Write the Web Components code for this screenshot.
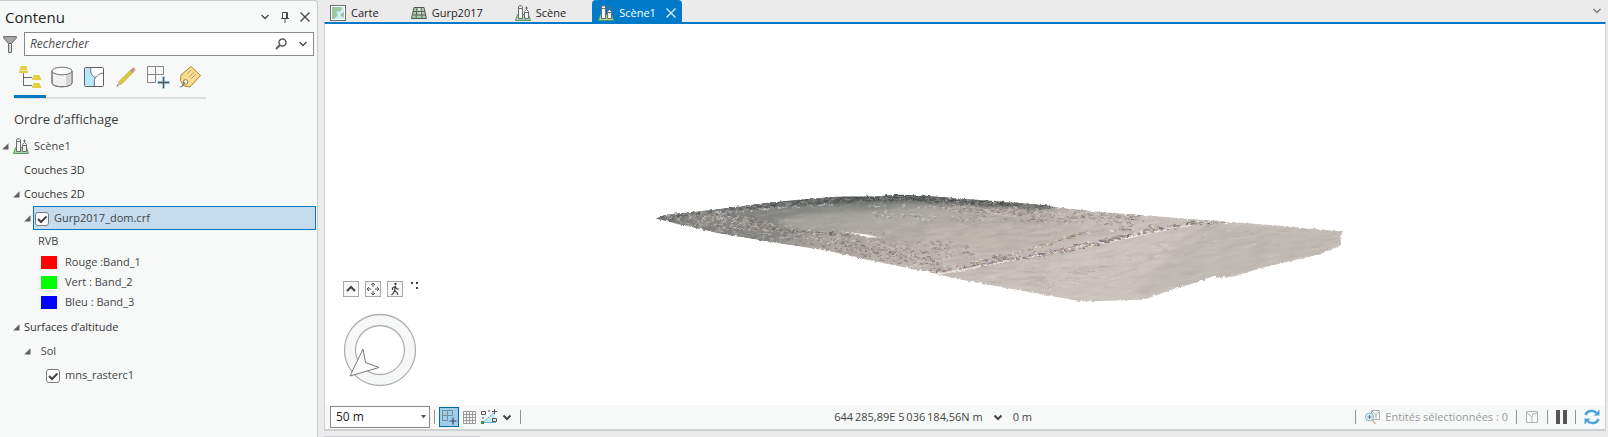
<!DOCTYPE html>
<html lang="fr">
<head>
<meta charset="utf-8">
<title>Scène1</title>
<style>
html, body { height: 100%; margin: 0; }
body { background: #ebebeb; font: 11px/16px "Open Sans", "Noto Sans", sans-serif; color: #444; }
</style>
</head>
<body>
<app-shell>
  <contents-pane slot="side"></contents-pane>
  <view-pane></view-pane>
</app-shell>
<script>
const ICONS = {
  chevron: '<svg width="10" height="10" viewBox="0 0 10 10" fill="none" stroke="currentColor" stroke-width="1.4"><path d="M1.5 3 5 6.5 8.5 3"/></svg>',
  chevronBold: '<svg width="10" height="10" viewBox="0 0 10 10" fill="none" stroke="currentColor" stroke-width="2"><path d="M1.500 3.500 5 7 8.500 3.500"/></svg>',
  pin: '<svg width="10" height="12" viewBox="0 0 10 12" fill="none" stroke="currentColor"><path d="M2.500 7V1.500h5V7M1 7.500h8M5 7.500V12M6.500 1.500V7" /></svg>',
  close: '<svg width="10" height="10" viewBox="0 0 10 10" fill="none" stroke="currentColor" stroke-width="1.4"><path d="M.5.5 9.500 9.500M9.500.5.5 9.500"/></svg>',
  funnel: '<svg width="14" height="17" viewBox="0 0 14 17" fill="#a8a8a8" stroke="#6a6a6a"><path d="M.6.6H13.400V2L8.500 7.500H5.500L.6 2Z"/><path fill="#d8d8d8" d="M5.500 7.500h3V16.400h-3Z"/></svg>',
  search: '<svg width="12" height="12" viewBox="0 0 12 12" fill="none" stroke="#5a5a5a"><circle cx="7.500" cy="4.500" r="3.500" stroke-width="1.500"/><path d="M5 7 1 11" stroke-width="2"/></svg>',
  expander: '<svg width="7" height="7" viewBox="0 0 7 7"><path d="M6.500.2V6.500H.2Z" fill="#5e5e5e"/></svg>',
  order: '<svg width="24" height="24" viewBox="0 0 24 24"><path d="M5.500 8V20.500H14M5.500 12.500H14" fill="none" stroke="#6a6a6a"/><g fill="#e6cf4b"><path d="M2.500 1H8.500L9.500 5.500H1.500Z"/><path d="M1 6H10V8H1Z"/><path d="M15.500 10H21.500L22.500 13H23V15H14V13H14.500Z"/><path d="M15.500 18H21.500L22.500 21H23V23H14V21H14.500Z"/></g></svg>',
  cylinder: '<svg width="24" height="24" viewBox="0 0 24 24" stroke="#747474"><path d="M2 6V18C2 23 22 23 22 18V6" fill="#f1f1f1"/><path d="M16 9V21C20 20.500 22 19.500 22 18V6Z" fill="#d4d4d4" stroke="none"/><path d="M2 6V18C2 23 22 23 22 18V6" fill="none"/><ellipse cx="12" cy="6" rx="10" ry="3.800" fill="#fafafa"/></svg>',
  selection: '<svg width="24" height="24" viewBox="0 0 24 24" fill="none"><rect x="2.500" y="2.500" width="19" height="19" rx="1" fill="#fff"/><path d="M3 3H9C8 7 9 10 13 12.500L12 16 12.500 21H3Z" fill="#b4e8fa"/><path d="M9 3C8 7 9 10 13 12.500 12 16 12.500 18 12.500 21M13 12.500C16 12 15 9 21 8" stroke="#6a6a6a"/><rect x="2.500" y="2.500" width="19" height="19" rx="1" stroke="#5e5e5e"/></svg>',
  pencil: '<svg width="24" height="24" viewBox="0 0 24 24"><path d="M4.500 17 16.500 5 19 7.500 7 19.500Z" fill="#dcc63a" stroke="#b39c2c" stroke-width=".6"/><path d="M4.500 17 7 19.500 2.500 21.500Z" fill="#c9b89b"/><path d="M2.500 21.500 3.200 19.800 4.200 20.800Z" fill="#444"/><path d="m16.500 5 1-1L20 6.500l-1 1Z" fill="#8a8a8a"/><path d="m17.500 4 1.500-1.500 2 .5.500 2L20 6.500Z" fill="#e98f86"/></svg>',
  snapping: '<svg width="24" height="24" viewBox="0 0 24 24" fill="none"><path d="M1.500 1.500h16v8M9.500 1.500v16M1.500 1.500v16h8M1.500 9.500h16" stroke="#858585"/><path d="M17.500 11V24M11 17.500H24" stroke="#a9dcf7" stroke-width="3"/><path d="M17.500 12V23M12 17.500H23" stroke="#555" stroke-width="1.300"/></svg>',
  label: '<svg width="24" height="24" viewBox="0 0 24 24" fill="none"><path d="M2.500 15.500 3 10 13 1.500 22.500 10.500 12 22 6 21Z" fill="#f6dc94" stroke="#b5862c" stroke-linejoin="round"/><path d="m9 9 4-4M11 12l5-5M13 14l5-5" stroke="#cba65a"/><circle cx="7.500" cy="17" r="2.300" fill="#fff" stroke="#8c7a50"/><path d="M7 17.500C5 18 5.500 22 2 22" stroke="#777" stroke-width="1.200"/></svg>',
  scene: '<svg width="16" height="16" viewBox="0 0 16 16"><path d="M2.500 9.500h11L15.500 15.500H.5Z" fill="#a9d3a6" stroke="#5d9b62"/><path d="M3.500 13.500V2L4.500.7H6.500L7.500 2V13.500ZM3.500 3.500h4" fill="#f6f6f6" stroke="#6b6b6b"/><path d="M11.500 6V1.500M10.200 3h2.600" stroke="#6b6b6b"/><path d="M9.500 13.500V6.500L11.500 4.500 13.500 6.500V13.500ZM9.500 7.500h4" fill="#f6f6f6" stroke="#6b6b6b"/></svg>',
  map: '<svg width="16" height="16" viewBox="0 0 16 16"><rect x=".5" y=".5" width="15" height="15" fill="#fff" stroke="#6e6e6e"/><rect x="2" y="2" width="12" height="12" fill="#cdebf8"/><path d="M2 2H11L12 4 9 7 7 6 6.500 8 8 10 5 13 4 14H2ZM11 9l3-2v5l-3-1Z" fill="#9cc79c"/></svg>',
  globe: '<svg width="16" height="16" viewBox="0 0 16 16"><path d="M3 2.500H13L15.500 13.500H.5Z" fill="#a5cfa6" stroke="#555"/><path d="M7 3h3l2 5-3 1Z" fill="#e2e8e8"/><path d="M2 6.500H14M1 10H15M6 2.500 5 13.500M10 2.500 11 13.500" fill="none" stroke="#5c6360"/></svg>'
};

class BaseElement extends HTMLElement {
  constructor() { super(); this.attachShadow({ mode: 'open' }); }
  connectedCallback() { if (!this.shadowRoot.firstChild) this.shadowRoot.innerHTML = this.render(); }
}

customElements.define('app-shell', class extends BaseElement {
  render() { return `<style>
    :host { display: grid; grid-template-columns: 318px minmax(0, 1fr); column-gap: 6px; height: 100vh; overflow: hidden; }
    </style><slot name="side"></slot><slot></slot>`; }
});

customElements.define('app-icon', class extends BaseElement {
  render() { return `<style>:host { display: inline-flex; flex: none; } svg { display: block; }</style>${ICONS[this.getAttribute('name')]}`; }
});

customElements.define('tree-row', class extends BaseElement {
  render() {
    const a = n => this.getAttribute(n);
    const box = this.hasAttribute('checkbox');
    const label = box ? `<label><input type="checkbox" checked><slot></slot></label>` : `<span><slot></slot></span>`;
    return `<style>
      :host { display: flex; align-items: center; height: 24px; }
      .toggle { width: 10px; flex: none; padding: 0; border: 0; background: none; display: flex; margin-right: 1px; }
      .item { flex: 1; display: flex; align-items: center; gap: 5px; white-space: nowrap; box-sizing: border-box; height: 100%; }
      :host([selected]) .toggle { width: 9px; margin-right: 0; }
      :host([selected]) .item { background: #c5dbee; border: 1px solid #0079c1; padding-left: 1px; margin-right: 1px; }
      :host([strong]) .item { color: #333; font-weight: 500; }
      label { display: flex; align-items: center; gap: 5px; }
      input { appearance: none; width: 14px; height: 14px; margin: 1px 0 0; border: 1px solid #7a7a7a; border-radius: 3px; background: #fff; }
      input:checked { background: #fff url("data:image/svg+xml,%3Csvg xmlns='http://www.w3.org/2000/svg' viewBox='0 0 12 12'%3E%3Cpath d='M2 6 5 9 10.500 3.500' fill='none' stroke='%23444' stroke-width='2'/%3E%3C/svg%3E"); }
      </style>
      ${this.hasAttribute('open') ? `<button class="toggle" aria-label="Réduire"><app-icon name="expander"></app-icon></button>` : ''}
      <div class="item">${a('icon') ? `<app-icon name="${a('icon')}"></app-icon>` : ''}${label}</div>`;
  }
});

customElements.define('band-row', class extends BaseElement {
  render() { return `<style>
    :host { display: flex; align-items: center; gap: 8px; height: 20px; padding-left: 41px; }
    i { width: 16px; height: 13px; background: ${this.getAttribute('color')}; }
    </style><i></i><slot></slot>`; }
});

customElements.define('contents-pane', class extends BaseElement {
  render() {
    const tools = [['order', 'Ordre d’affichage'], ['cylinder', 'Source'], ['selection', 'Sélection'], ['pencil', 'Mise à jour'], ['snapping', 'Capture'], ['label', 'Étiquetage']];
    return `<style>
      :host { display: flex; flex-direction: column; background: #f7f9f8; border: 1px solid #cbcbcf; border-width: 1px 1px 0 0; border-radius: 0 4px 0 0; box-sizing: border-box; }
      button { padding: 0; border: 0; background: none; color: #4a4a4a; display: flex; align-items: center; justify-content: center; }
      header { display: flex; align-items: center; height: 31px; padding: 0 7px 0 5px; gap: 10px; }
      h1 { margin: 0; flex: 1; font-size: 15px; line-height: 20px; font-weight: 400; color: #222; }
      .search { display: flex; align-items: center; gap: 7px; padding: 0 3px; }
      .field { flex: 1; display: flex; align-items: center; height: 24px; box-sizing: border-box; border: 1px solid #8a8a8a; background: #fff; padding: 0 5px; gap: 11px; }
      input { flex: 1; min-width: 0; border: 0; outline: 0; padding: 0; background: none; font: italic 12px/16px "Open Sans", "Noto Sans", sans-serif; }
      input::placeholder { color: #4c4c4c; opacity: 1; }
      nav { display: flex; align-self: flex-start; margin: 6px 0 0 14px; border-bottom: 2px solid #dedede; }
      nav button { width: 32px; height: 35px; padding-bottom: 5px; box-sizing: border-box; }
      nav button.on { border-bottom: 3px solid #0079c1; margin-bottom: -1px; height: 36px; padding-bottom: 3px; }
      h2 { margin: 10px 0 5px 14px; font-size: 13px; line-height: 20px; font-weight: 500; color: #3c3c3c; }
      .l0 { padding-left: 2px; } .l1 { padding-left: 13px; } .l2 { padding-left: 24px; }
      .l1n { padding-left: 24px; } .rvb { padding-left: 38px; height: 22px; } .surf { margin-top: 3px; }
      .mns { padding-left: 46px; }
      </style>
      <header><h1>Contenu</h1><button aria-label="Options"><app-icon name="chevron"></app-icon></button><button aria-label="Épingler"><app-icon name="pin"></app-icon></button><button aria-label="Fermer"><app-icon name="close"></app-icon></button></header>
      <div class="search"><app-icon name="funnel"></app-icon><div class="field"><input type="text" aria-label="Rechercher" placeholder="Rechercher"><button aria-label="Lancer la recherche"><app-icon name="search"></app-icon></button><button aria-label="Options de recherche"><app-icon name="chevron"></app-icon></button></div></div>
      <nav>${tools.map(([n, t], i) => `<button class="${i ? '' : 'on'}" aria-label="${t}"><app-icon name="${n}"></app-icon></button>`).join('')}</nav>
      <h2>Ordre d’affichage</h2>
      <tree-row class="l0" open icon="scene">Scène1</tree-row>
      <tree-row class="l1n" strong>Couches 3D</tree-row>
      <tree-row class="l1" strong open>Couches 2D</tree-row>
      <tree-row class="l2" open selected checkbox>Gurp2017_dom.crf</tree-row>
      <tree-row class="rvb">RVB</tree-row>
      <band-row color="#f00">Rouge :Band_1</band-row>
      <band-row color="#0f0">Vert : Band_2</band-row>
      <band-row color="#00f">Bleu : Band_3</band-row>
      <tree-row class="l1 surf" strong open>Surfaces d’altitude</tree-row>
      <tree-row class="l2" open>&nbsp;&nbsp;Sol</tree-row>
      <tree-row class="mns" checkbox>mns_rasterc1</tree-row>`;
  }
});

customElements.define('view-tab', class extends BaseElement {
  render() {
    const active = this.hasAttribute('active');
    return `<style>
      :host { display: flex; align-items: stretch; padding: 0 6px; color: #222; }
      :host([active]) { background: #007ac9; color: #fff; border-radius: 4px 4px 0 0; }
      button { display: flex; align-items: center; padding: 3px 0 0; border: 0; background: none; color: inherit; font: inherit; white-space: nowrap; }
      .tab { gap: 5px; }
      .x, .space { width: 20px; }
      .x { justify-content: flex-end; color: #d4ebfa; }
      </style><button class="tab"><app-icon name="${this.getAttribute('icon')}"></app-icon><slot></slot></button>
      ${active ? '<button class="x" aria-label="Fermer l’onglet"><app-icon name="close"></app-icon></button>' : '<span class="space"></span>'}`;
  }
});

customElements.define('scene-canvas', class extends BaseElement {
  render() {
    // Deterministic generator so that the terrain has the same grain at each load.
    let seed = 2017;
    const rnd = () => (seed = (seed * 16807) % 2147483647) / 2147483647;
    const pick = list => list[Math.floor(rnd() * list.length)];
    const along = (pts, n, spread, colors, len, op) => {
      let out = '';
      for (let i = 0; i < n; i++) {
        const t = rnd() * (pts.length - 1), k = Math.floor(t), f = t - k;
        const x = pts[k][0] + (pts[k + 1][0] - pts[k][0]) * f + (rnd() - .5) * 8;
        const y = pts[k][1] + (pts[k + 1][1] - pts[k][1]) * f + (rnd() + rnd() - 1) * spread;
        const l = 1 + rnd() * len;
        out += `<path d="M${x.toFixed(1)} ${y.toFixed(1)}l${l.toFixed(1)} ${((rnd() - .5) * 1.6).toFixed(1)}" stroke="${pick(colors)}" opacity="${op}"/>`;
      }
      return out;
    };
    const rock = ['#7d7775', '#958d89', '#a79f99', '#d8d2cc', '#6c6a72', '#b3aaa2', '#c9c1ba'];
    const dark = ['#4c5252', '#636767', '#3c4341', '#858886', '#9b9c98'];
    const wrack = ['#655e70', '#8c7a70', '#a58f86', '#f2efec', '#99946c', '#857f88', '#b09a92'];
    const outline = 'M656 218 663 215 668 214 715 209 770 202 800 199 840 196 875 196 900 194 925 195 960 198 1000 201 1040 204 1060 207 1110 212 1150 215 1200 219 1240 222 1290 226 1340 231 1344 230 1341 236 1342 245 1332 249 1320 254 1290 261 1260 268 1235 276 1222 277 1215 275 1200 281 1170 290 1145 299 1120 300 1082 301 1060 297 1010 288 960 279 930 272 895 265 865 259 835 252 825 250 780 243 720 233 680 224Z';
    return `<style>
      :host { display: block; position: relative; background: #fff; min-height: 0; }
      .terrain { display: block; width: 100%; height: 100%; }
      .navigator { position: absolute; left: 18px; bottom: 18px; }
      .buttons { display: flex; gap: 6px; align-items: flex-start; }
      button { width: 16px; height: 16px; padding: 0; border: 1px solid #a8a8a8; background: #f7f9f8; display: flex; align-items: center; justify-content: center; }
      .grip { margin: 0 0 0 2px; }
      .ring { display: block; margin: 16px 0 0; }
      </style>
      <svg class="terrain" viewBox="325 24 1281 380" role="img" aria-label="Relief Gurp2017">
        <defs>
          <linearGradient id="base" gradientUnits="userSpaceOnUse" x1="930" y1="192" x2="960" y2="298">
            <stop offset="0" stop-color="#858784"/><stop offset=".14" stop-color="#a8a49f"/><stop offset=".38" stop-color="#b7aea8"/><stop offset=".65" stop-color="#c8bfb8"/><stop offset="1" stop-color="#c8c2bd"/>
          </linearGradient>
          <linearGradient id="west" gradientUnits="userSpaceOnUse" x1="656" y1="0" x2="820" y2="0"><stop offset="0" stop-color="#4f5252" stop-opacity=".8"/><stop offset=".2" stop-color="#5d5a5a" stop-opacity=".15"/><stop offset="1" stop-color="#5d5c5c" stop-opacity="0"/></linearGradient>
          <filter id="blur" x="-20%" y="-80%" width="140%" height="260%"><feGaussianBlur stdDeviation="5 2"/></filter>
          <filter id="rough"><feTurbulence type="fractalNoise" baseFrequency=".3" numOctaves="2" seed="4"/><feDisplacementMap in="SourceGraphic" scale="3" xChannelSelector="R" yChannelSelector="G"/></filter>
          <filter id="grain" x="0" y="0" width="100%" height="100%"><feTurbulence type="fractalNoise" baseFrequency=".04 .3" numOctaves="4" seed="9"/><feColorMatrix values="0 0 0 0 .3  0 0 0 0 .28  0 0 0 0 .27  2.4 0 0 0 -1.05"/></filter>
          <filter id="shine" x="0" y="0" width="100%" height="100%"><feTurbulence type="fractalNoise" baseFrequency=".05 .3" numOctaves="3" seed="31"/><feColorMatrix values="0 0 0 0 1  0 0 0 0 .98  0 0 0 0 .95  2 0 0 0 -1"/></filter>
          <clipPath id="land"><path d="${outline}"/></clipPath>
        </defs>
        <g filter="url(#rough)"><g clip-path="url(#land)" fill="none">
          <path d="${outline}" fill="url(#base)"/>
          <path d="${outline}" fill="url(#west)"/>
          <path d="M700 207 895 193 1000 200 1060 207 980 206 900 200 790 204Z" fill="#3c4341" opacity=".85" filter="url(#blur)"/>
          <path d="M775 220C830 207 890 208 1000 214L1110 232 1010 247 880 236 790 229Z" fill="#b3afa7" opacity=".7" filter="url(#blur)"/>
          <path d="M930 225 1090 226 1120 232 1010 252 920 245Z" fill="#c5bbb3" opacity=".7" filter="url(#blur)"/>
          <path d="M960 278 1130 238 1220 221 1345 231 1342 246 1150 299 1080 301Z" fill="#cdc4bd" opacity=".9" filter="url(#blur)"/>
          <path d="M1200 222 1345 231 1342 246 1250 270 1130 299Z" fill="#bbb6b0" opacity=".65" filter="url(#blur)"/>
          <g transform="rotate(-12 1080 265)"><rect x="930" y="190" width="450" height="160" filter="url(#grain)" opacity=".2"/></g>
          <rect x="650" y="190" width="400" height="110" filter="url(#grain)" opacity=".3"/>
          <g transform="rotate(-8 1000 250)"><rect x="650" y="150" width="700" height="200" filter="url(#shine)" opacity=".2"/></g>
          ${along([[660, 216], [740, 208], [830, 199], [900, 197], [980, 202], [1050, 207]], 700, 4, dark, 4, .7)}
          ${along([[662, 219], [740, 226], [810, 238], [880, 251], [940, 264]], 1200, 11, rock, 3, .6)}
          ${along([[690, 216], [740, 218], [770, 228]], 350, 8, rock, 3, .6)}
          ${along([[800, 233], [860, 237], [920, 246], [970, 253]], 240, 9, rock, 4, .5)}
          ${along([[940, 204], [1010, 212], [1070, 217], [1140, 220]], 520, 8, rock, 4, .6)}
          ${along([[700, 214], [770, 208], [830, 204], [880, 206], [960, 207], [1020, 217]], 60, 1, ['#d0d0cc', '#c6c9c5'], 4, .7)}
          <path d="M930 275C1000 263 1055 251 1100 243S1150 231 1205 222" stroke="#eae5e1" stroke-width="1.500"/>
          ${along([[930, 272], [980, 264], [1010, 259], [1060, 250], [1100, 242], [1130, 234], [1170, 226], [1225, 221]], 420, 3, wrack, 3, .85)}
          ${along([[970, 262], [1010, 255], [1050, 243], [1080, 233], [1150, 226]], 130, 2, wrack, 4, .65)}
          ${along([[752, 219], [765, 227], [785, 231], [820, 232], [850, 235]], 80, 1, ['#5e5c60', '#777069', '#a9a29b'], 3, .8)}
          <path d="m840 231 12 1 16 2 12 3-12 0-8-3Z" fill="#f3f1ee"/>
          ${along([[1040, 285], [1100, 267], [1180, 245], [1280, 232]], 80, 12, ['#a39b96', '#ddd6cf', '#b4aba4'], 9, .4)}
          ${along([[875, 213], [920, 217], [985, 220]], 80, 4, ['#8b8990', '#dadad6', '#8a8c8c'], 3, .6)}
        </g></g>
      </svg>
      <div class="navigator">
        <div class="buttons">
          <button aria-label="Afficher les commandes"><svg width="10" height="10" viewBox="0 0 10 10" fill="none" stroke="#444" stroke-width="2"><path d="M1 7 5 3 9 7"/></svg></button>
          <button aria-label="Déplacer"><svg width="14" height="14" viewBox="0 0 14 14" fill="none" stroke="#555"><path d="M7 1V5M7 9V13M1 7H5M9 7H13M5 3 7 1 9 3M5 11 7 13 9 11M3 5 1 7 3 9M11 5 13 7 11 9"/></svg></button>
          <button aria-label="Marcher"><svg width="12" height="14" viewBox="0 0 12 14" fill="none" stroke="#444" stroke-width="1.200"><circle cx="6.500" cy="2" r="1.200" fill="#444" stroke="none"/><path d="M6.500 4 5.500 8.500 8 10.500 9 13M5.500 8.500 4.500 11 2.500 13M6 4.500 3.500 6V8M6.500 5 8 7H10"/></svg></button>
          <svg class="grip" width="10" height="8" viewBox="0 0 10 8" fill="#444"><path d="M0 1h2v2H0ZM5 1h2v2H5ZM5 6h2v2H5Z"/></svg>
        </div>
        <svg class="ring" width="74" height="74" viewBox="0 0 74 74"><path fill-rule="evenodd" d="M37 1.500a35.500 35.500 0 1 0 .01 0ZM37 12.500a24.500 24.500 0 1 1-.01 0Z" fill="#f6f8f7" stroke="#b0b0b0" stroke-width="1.300"/><path d="M7 63 20 36 22.500 49.500 36 54.500Z" fill="#fbfcfb" stroke="#7a7a7a"/></svg>
      </div>`;
  }
});

customElements.define('status-bar', class extends BaseElement {
  render() { return `<style>
    :host { display: flex; align-items: center; height: 24px; padding: 0 5px; background: #f7f9f8; white-space: nowrap; color: #444; }
    div { display: flex; align-items: center; }
    .mid { flex: 1; justify-content: center; gap: 10px; padding-right: 10px; }
    button { display: flex; align-items: center; justify-content: center; padding: 0; border: 0; background: none; color: #444; font: inherit; }
    .scale { position: relative; display: block; }
    select { display: block; appearance: none; width: 100px; height: 22px; box-sizing: border-box; padding: 0 5px; border: 1px solid #8a8a8a; border-radius: 0; background: #fff; font: inherit; font-size: 12px; color: #222; }
    .scale svg { position: absolute; right: 4px; top: 9px; pointer-events: none; }
    hr { width: 1px; height: 14px; margin: 0; border: 0; background: #929292; }
    .left { gap: 4px; }
    .left hr:last-child { margin-left: 4px; }
    .on { width: 20px; height: 20px; background: #9fcdee; border: 1px solid #006ba8; }
    .right { gap: 8px; }
    .sel { gap: 4px; color: #999; }
    </style>
    <div class="left">
      <label class="scale"><select aria-label="Échelle"><option>50 m</option></select><svg width="5" height="4" viewBox="0 0 5 4"><path d="M0 0H5L2.500 3.500Z" fill="#555"/></svg></label>
      <hr>
      <button class="on" aria-label="Capture"><svg width="16" height="16" viewBox="0 0 16 16" fill="none"><path d="M1.500 1.500h10v5M6.500 1.500v10M1.500 1.500v10h5M1.500 6.500h10" stroke="#7f8d96"/><path d="M12 8.500V15.500M8.500 12H15.500" stroke="#445" stroke-width="1.200"/></svg></button>
      <button aria-label="Grille"><svg width="13" height="13" viewBox="0 0 13 13" fill="none" stroke="#999"><path d="M.5.5h12v12H.5ZM3.500.5v12M6.500.5v12M9.500.5v12M.5 3.500h12M.5 6.500h12M.5 9.500h12"/></svg></button>
      <button aria-label="Contraintes"><svg width="18" height="16" viewBox="0 0 18 16" fill="none"><path d="M3 13 15 4V13Z" fill="#c8e8f8"/><path d="M3 13 14 4" stroke="#4b9cc8" stroke-dasharray="2 1"/><path d="M3 13.500H16" stroke="#65b3dc"/><path d="M1.500 2.500h4v3h-4ZM12.500 9.500h4v3h-4ZM12 2.500h5M14.500 0V5M8 2h2M3 8v2" stroke="#555"/><path d="M1 12h3v3H1Z" fill="#3f9153"/></svg></button>
      <button aria-label="Plus d’options"><app-icon name="chevronBold"></app-icon></button>
      <hr>
    </div>
    <div class="mid"><span>644&#8198;285,89E 5&#8198;036&#8198;184,56N m</span><button aria-label="Unités"><app-icon name="chevronBold"></app-icon></button><span>0 m</span></div>
    <div class="right"><hr>
      <button class="sel"><svg width="17" height="16" viewBox="0 0 17 16" fill="none"><path d="M7.500 1.500h8v9h-8ZM8 2l4 4v4M12 6l3-3" stroke="#b0b0b0"/><circle cx="5.500" cy="8" r="4" fill="#d7edf8" stroke="#89b5cf"/><path d="M3.500 8h4M5.500 6v4" stroke="#777"/><path d="m8.500 11 3 4" stroke="#e1b9a0" stroke-width="2"/></svg><span>Entités sélectionnées : 0</span></button>
      <hr><button aria-label="Effacer la sélection"><svg width="14" height="14" viewBox="0 0 14 14" fill="none" stroke="#b3b3b3"><path d="M1.500 1.500h11v11h-11ZM2 3l5 4v5.500M7 7l1-3 4-1"/></svg></button>
      <hr><button aria-label="Suspendre"><svg width="11" height="14" viewBox="0 0 11 14" fill="#555"><path d="M0 0h4v14H0ZM7 0h4v14H7Z"/></svg></button>
      <hr><button aria-label="Actualiser"><svg width="16" height="16" viewBox="0 0 16 16" fill="none" stroke="#4da3dc" stroke-width="2.400"><path d="M1.500 6C3 1.500 9 .5 12.500 4M14.500 10C13 14.500 7 15.500 3.500 12"/><path d="M15.500.5V6.500H9.500ZM.5 15.500V9.500H6.500Z" fill="#4da3dc" stroke="none"/></svg></button>
    </div>`; }
});

customElements.define('view-pane', class extends BaseElement {
  render() { return `<style>
    :host { display: grid; grid-template-rows: 22px minmax(0, 1fr) 6px; min-width: 0; }
    .tabs { display: flex; }
    .more { margin: 0 6px 0 auto; padding: 0; border: 0; background: none; color: #777; display: flex; align-items: center; }
    .frame { display: grid; grid-template-rows: minmax(0, 1fr) auto; border: 1px solid #cfd0d3; border-top: 2px solid #0079c9; border-bottom-width: 2px; margin-right: 2px; }
    .dock { width: 156px; height: 1px; margin-top: 5px; background: #cbcbcf; }
    </style>
    <div class="tabs"><view-tab icon="map">Carte</view-tab><view-tab icon="globe">Gurp2017</view-tab><view-tab icon="scene">Scène</view-tab><view-tab icon="scene" active>Scène1</view-tab><button class="more" aria-label="Liste des vues"><app-icon name="chevron"></app-icon></button></div>
    <div class="frame"><scene-canvas></scene-canvas><status-bar></status-bar></div>
    <div class="dock"></div>`; }
});
</script>
</body>
</html>
